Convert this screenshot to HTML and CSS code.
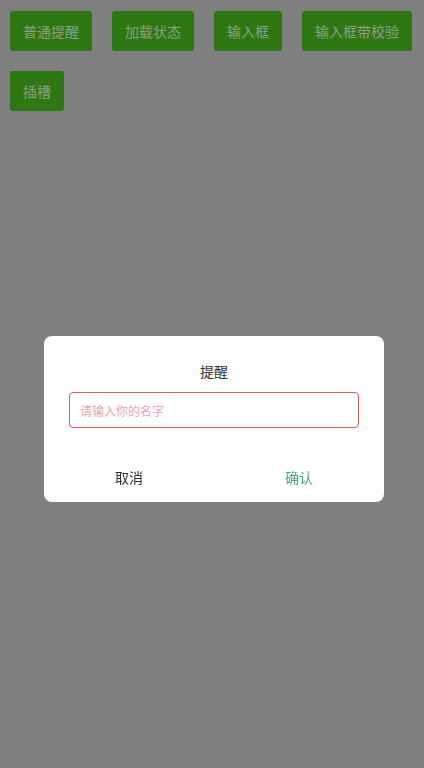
FILE: index.html
```html
<!DOCTYPE html>
<html lang="zh">
<head>
<meta charset="utf-8">
<link rel="stylesheet" href="styles.css">
</head>
<body>
<div class="btns">
  <button class="btn">普通提醒</button>
  <button class="btn">加载状态</button>
  <button class="btn">输入框</button>
  <button class="btn">输入框带校验</button>
  <button class="btn">插槽</button>
</div>
<div class="mask"></div>
<div class="dialog">
  <div class="title">提醒</div>
  <div class="field"><input class="input" type="text" placeholder="请输入你的名字"></div>
  <div class="actions">
    <div class="act cancel">取消</div>
    <div class="act ok">确认</div>
  </div>
</div>
</body>
</html>
```

FILE: styles.css
```css
html, body {
  margin: 0;
  padding: 0;
  height: 100%;
  background: #7f7f7f;
  font-family: "Noto Sans CJK SC", "Liberation Sans", sans-serif;
}
.btns {
  display: flex;
  flex-wrap: wrap;
  padding-top: 1px;
}
.btn {
  margin: 10px;
  height: 40px;
  padding: 0 13px;
  border: none;
  border-radius: 3px;
  background: #2e7813;
  color: #8a9e84;
  font-family: "Noto Sans CJK SC", sans-serif;
  font-size: 14px;
  line-height: 40px;
}
.mask {
  position: fixed;
  inset: 0;
  background: transparent;
}
.dialog {
  position: absolute;
  left: 44px;
  top: 336px;
  width: 340px;
  height: 166px;
  background: #fff;
  border-radius: 8px;
  display: flex;
  flex-direction: column;
}
.title {
  padding-top: 25px;
  height: 20px;
  line-height: 20px;
  text-align: center;
  font-size: 14px;
  color: #333;
}
.field {
  padding: 11px 25px 0;
}
.input {
  box-sizing: border-box;
  width: 100%;
  height: 36px;
  border: 1px solid #d4605e;
  border-radius: 4px;
  padding: 0 10px;
  font-family: "Noto Sans CJK SC", sans-serif;
  font-size: 12px;
  outline: none;
}
.input::placeholder {
  color: #e9a4aa;
}
.actions {
  margin-top: 26px;
  display: flex;
  height: 48px;
}
.act {
  flex: 1;
  text-align: center;
  line-height: 46px;
  font-size: 14px;
}
.cancel { color: #333; }
.ok { color: #45b076; }
```
